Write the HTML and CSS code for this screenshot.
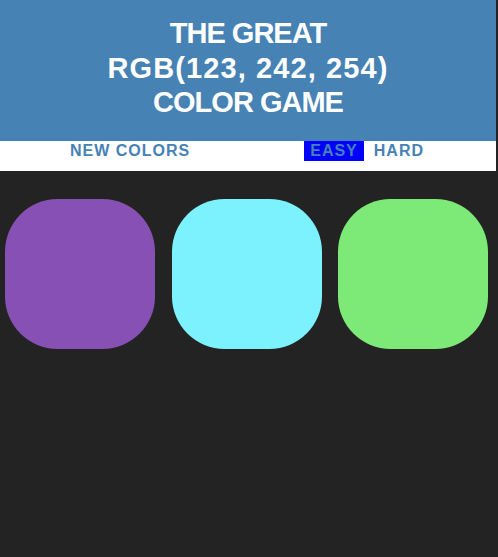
FILE: index.html
```html
<!DOCTYPE html>
<html lang="en">
<head>
<meta charset="utf-8">
<title>Color Game</title>
<link rel="stylesheet" href="styles.css">
</head>
<body>
<div class="page">
  <h1 class="title">The Great<br><span class="color-display">RGB(123, 242, 254)</span><br>Color Game</h1>
  <div class="stripe">
    <button class="btn">New Colors</button>
    <span class="message"></span>
    <button class="btn mode selected">Easy</button>
    <button class="btn mode">Hard</button>
  </div>
  <div class="board">
    <div class="square sq-purple"></div>
    <div class="square sq-cyan"></div>
    <div class="square sq-green"></div>
  </div>
</div>
</body>
</html>
```

FILE: styles.css
```css
html, body {
  margin: 0;
  padding: 0;
  background: #232323;
  height: 100%;
}

.page {
  width: 496px;
}

.title {
  margin: 0;
  padding: 16px 0 21.5px;
  background: #4682b4;
  color: #ffffff;
  text-align: center;
  text-transform: uppercase;
  font-family: "Liberation Sans", Arial, sans-serif;
  font-weight: 700;
  font-size: 29px;
  line-height: 34.5px;
  letter-spacing: -1px;
}

.color-display {
  letter-spacing: 1.1px;
}

.stripe {
  display: flex;
  align-items: flex-start;
  height: 30px;
  background: #ffffff;
  padding-left: 64px;
}

.btn {
  border: none;
  background: none;
  margin: 0;
  padding: 0 6px;
  height: 20px;
  font-family: "Liberation Sans", Arial, sans-serif;
  font-weight: 700;
  font-size: 16px;
  letter-spacing: 1px;
  text-transform: uppercase;
  color: #4682b4;
  cursor: pointer;
}

.message {
  width: 108px;
}

.mode + .mode {
  margin-left: 4px;
}

.selected {
  background: #0000ff;
}

.board {
  display: flex;
  gap: 16.5px;
  padding: 28px 0 0 5px;
}

.square {
  width: 150px;
  height: 150px;
  border-radius: 35%;
}

.sq-purple { background: #8750b5; }
.sq-cyan { background: #7bf2fe; }
.sq-green { background: #7dea78; }
```
